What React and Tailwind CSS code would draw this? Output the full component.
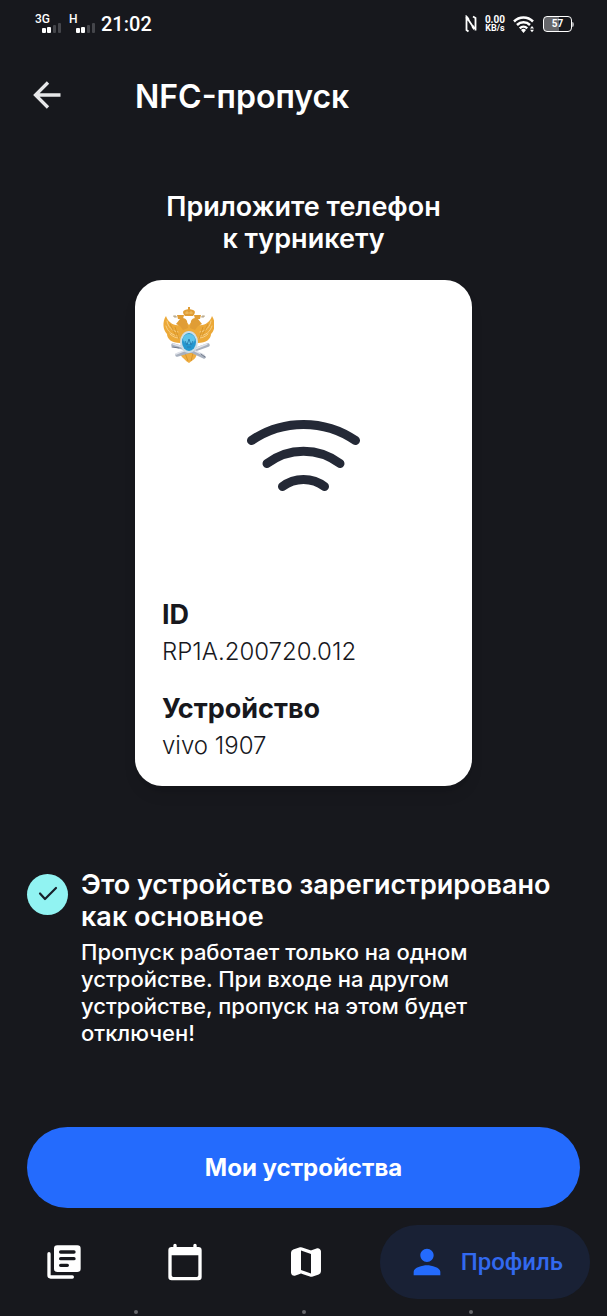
import React from 'react';

const navLinks = [
  {
    label: 'Новости',
    href: '#news',
    d: 'M3 6a1 1 0 0 0-1 1v13a2 2 0 0 0 2 2h13a1 1 0 0 0 0-2H4V7a1 1 0 0 0-1-1zM20 2H8a2 2 0 0 0-2 2v12a2 2 0 0 0 2 2h12a2 2 0 0 0 2-2V4a2 2 0 0 0-2-2zM18 11h-8a1 1 0 0 1 0-2h8a1 1 0 0 1 0 2zM14 15h-4a1 1 0 0 1 0-2h4a1 1 0 0 1 0 2zM18 7h-8a1 1 0 0 1 0-2h8a1 1 0 0 1 0 2z',
  },
  {
    label: 'Расписание',
    href: '#schedule',
    d: 'M20 3h-1V2a1 1 0 0 0-2 0v1H7V2a1 1 0 0 0-2 0v1H4a2 2 0 0 0-2 2v16a2 2 0 0 0 2 2h16a2 2 0 0 0 2-2V5a2 2 0 0 0-2-2zM19 21H5a1 1 0 0 1-1-1V8h16v12a1 1 0 0 1-1 1z',
  },
  {
    label: 'Карта',
    href: '#map',
    d: 'M14.65 4.98 9.65 3.230a2 2 0 0 0-1.300-.01L4.360 4.560A2 2 0 0 0 3 6.460v11.850c0 1.410 1.410 2.370 2.720 1.860l2.930-1.140c.22-.09.470-.09.690-.01l5 1.750c.42.150.880.150 1.300.010l3.990-1.340a2 2 0 0 0 1.360-1.900V5.690c0-1.410-1.410-2.370-2.720-1.860l-2.930 1.140c-.22.080-.46.090-.69.010zM15 18.890l-6-2.110V5.110l6 2.110v11.670z',
  },
];

function Emblem() {
  return (
    <svg viewBox="0 0 52 56" className="w-[52px] h-[56px]" role="img" aria-label="Герб">
      {/* Wings */}
      <g fill="#eca938">
        <path d="M4 9C0 15 1 23 5 27c0 5 5 9 13 9l6-3V19l-6-1C11 19 6 15 4 9z" />
        <path d="M50 9c4 6 3 14-1 18 0 5-5 9-13 9l-6-3V19l6-1c7 1 12-3 14-9z" />
        <path d="M19 32V18l4-5 4 5 4-5 4 5v14l-3 15-5 8-5-8z" />
      </g>
      <g fill="none" stroke="#f8cf85" strokeWidth="1" strokeLinecap="round">
        <path d="M5 14c1 6 5 10 11 11M4 19c2 6 6 9 12 10M8 27c3 3 6 4 9 4M49 14c-1 6-5 10-11 11M50 19c-2 6-6 9-12 10M46 27c-3 3-6 4-9 4" />
      </g>
      <path d="M8 17l6 12M13 20l4 12M46 17l-6 12M41 20l-4 12" stroke="#d28f25" strokeWidth=".8" fill="none" />
      {/* Heads and crowns */}
      <g fill="#e09d35">
        <path d="M14 17l4-5c2-2 6-1 7 2l1 7-5 2-3-4zM40 17l-4-5c-2-2-6-1-7 2l-1 7 5 2 3-4z" />
        <path d="M23 9c-2-2-3-5 0-6 2-1 6-1 8 0 3 1 2 4 0 6zM26 0h2v4h-2zM15 8h7l-1 4h-5zM32 8h7l-1 4h-5z" />
      </g>
      <path d="M23 6h8M25 7V4M29 7V4" stroke="#f3c46d" strokeWidth=".8" />
      <path d="M11 9l4 1M43 9l-4 1M13 8v3M41 8v3" stroke="#b8a88a" strokeWidth="1" />
      {/* Tail */}
      <path d="M18 47c2 4 5 5 6 7l3 2 4-3c2-1 3-3 4-6z" fill="#efae43" />
      <path d="M23 46l3 8M31 46l-2 8" stroke="#d28f25" strokeWidth=".8" />
      {/* Crossed quills */}
      <g strokeLinecap="round" fill="none">
        <path d="M11 38l14 4 17 8M46 38l-14 5-17 5" stroke="#a8b0bd" strokeWidth="3.500" />
        <path d="M11 37l13 4M45 37l-12 5M14 47l10-4M33 44l9 4" stroke="#e0e3ea" strokeWidth="1.400" />
        <path d="M10 40l7 1M39 47l4 3" stroke="#6f7888" strokeWidth="1" />
      </g>
      {/* Shield */}
      <ellipse cx="27" cy="35" rx="9" ry="11" fill="#cbdde6" />
      <ellipse cx="27" cy="35" rx="7" ry="9" fill="#2497cf" />
      <ellipse cx="27" cy="32" rx="6" ry="5" fill="#60c4e9" />
      <path d="M23 34l2 4 2-6 2 6 2-4M25 40h4" stroke="#2a7fb2" strokeWidth="1" fill="none" />
    </svg>
  );
}

function SignalBars() {
  return (
    <svg viewBox="0 0 20 10" className="w-5 h-[10px]" aria-hidden="true">
      <g fill="#fff">
        <rect x="0" y="5" width="4" height="5" rx="1" />
        <rect x="5" y="4" width="4" height="6" rx="1" />
      </g>
      <g fill="#45464b">
        <rect x="11" y="2" width="3" height="8" rx="1" />
        <rect x="16" y="0" width="3" height="10" rx="1" />
      </g>
    </svg>
  );
}

function StatusBar() {
  return (
    <div className="flex items-center justify-between h-12 pl-[35px] pr-[33px] font-['Roboto',sans-serif]">
      <div className="flex items-center">
        {/* Both SIM cards */}
        <div className="flex flex-col items-end w-[27px]">
          <span className="w-full text-[12px] leading-[8px] font-medium">3G</span>
          <SignalBars />
        </div>
        <div className="flex flex-col items-end w-[27px] ml-[7px]">
          <span className="w-full text-[12px] leading-[8px] font-medium">H</span>
          <SignalBars />
        </div>
        <span className="ml-[5px] text-[20px] leading-6 font-medium">21:02</span>
      </div>
      <div className="flex items-center gap-2">
        <svg viewBox="0 0 12 18" className="w-3 h-[18px]" fill="none" stroke="#fff" strokeWidth="1.800" aria-hidden="true">
          <path d="M3.500 16.500L1.500 15V2l8 12" />
          <path d="M8 1.500L10.500 3v12.500" />
          <path d="M1.500 2l2 3M9.500 14l-2-3" strokeWidth="2.600" />
        </svg>
        <div className="flex flex-col items-center font-bold">
          <span className="text-[10px] leading-[9px]">0.00</span>
          <span className="text-[9px] leading-[9px]">KB/s</span>
        </div>
        <svg viewBox="0 0 22 17" className="w-[22px] h-[17px]" aria-hidden="true">
          <g fill="none" stroke="#fff" strokeWidth="2.500">
            <path d="M1 5.500a13.500 13.500 0 0 1 19 0" />
            <path d="M4 9a9.300 9.300 0 0 1 13 0" />
            <path d="M6.800 12.300a5.400 5.400 0 0 1 7.400 0" />
          </g>
          <path d="M8 14a3.600 3.600 0 0 1 5 0L10.500 17zM17 12.500l2-2.500 2 2.500zM17 13.700l2 2.500 2-2.500z" fill="#fff" />
        </svg>
        <div className="flex items-center">
          <div className="flex items-center justify-center w-[29px] h-4 rounded-[4px] border border-white bg-linear-to-r from-[#66676b] from-57% to-[#17181d] to-57%">
            <span className="text-[10px] leading-3 font-bold">57</span>
          </div>
          <div className="w-[2px] h-[5px] rounded-r-sm bg-[#a0a1a4]" />
        </div>
      </div>
    </div>
  );
}

export default function App() {
  return (
    <div className="flex flex-col min-h-screen bg-[#17181d] text-white font-['Inter',sans-serif]">
      <StatusBar />

      <header className="flex items-center h-[94px] px-[27px]">
        <button className="flex items-center justify-center w-10 h-10" aria-label="Назад">
          <svg viewBox="0 0 28 28" className="w-7 h-7" fill="none" stroke="#e7e7e9" strokeWidth="3.300" aria-hidden="true">
            <path d="M27.500 14H3M15 1.500L2.500 14 15 26.500" />
          </svg>
        </button>
        <h1 className="ml-[68px] mt-1 text-[32px] leading-10 font-semibold">NFC-пропуск</h1>
      </header>

      <main className="flex flex-col grow px-[27px] pt-[49px]">
        <h2 className="text-center text-[27px] leading-8 font-semibold">
          Приложите телефон
          <br />
          к турникету
        </h2>

        {/* Pass card */}
        <section className="mx-[108px] mt-[25px] p-[27px] rounded-[27px] bg-white text-[#17181d] shadow-lg">
          <Emblem />
          <svg viewBox="0 0 114 73" className="w-[114px] h-[73px] mx-auto mt-14" fill="none" stroke="#242936" strokeWidth="9" strokeLinecap="round" aria-hidden="true">
            <path d="M4.500 21.500C35.500 0 77.500 0 108.500 21.500" />
            <path d="M20 44.500C41.500 28 71.500 28 93 44.500" />
            <path d="M35.500 67.500C47.500 58 65.500 58 77.500 67.500" />
          </svg>
          <dl className="mt-[107px]">
            <dt className="text-[27px] leading-8 font-bold">ID</dt>
            <dd className="mt-[7px] text-[24px] leading-[27px] font-light">RP1A.200720.012</dd>
            <dt className="mt-7 text-[27px] leading-8 font-bold">Устройство</dt>
            <dd className="mt-[7px] text-[24px] leading-[27px] font-light">vivo 1907</dd>
          </dl>
        </section>

        {/* Registration status */}
        <section className="flex items-start gap-[13px] mt-[83px]">
          <div className="flex items-center justify-center shrink-0 w-[41px] h-[41px] mt-[5px] rounded-full bg-[#91f3f2]">
            <svg viewBox="0 0 20 16" className="w-5 h-4 -mt-1" fill="none" stroke="#17202b" strokeWidth="2.200" strokeLinecap="round" strokeLinejoin="round" aria-hidden="true">
              <path d="M2 8.500L7 14 18 3" />
            </svg>
          </div>
          <div>
            <h3 className="text-[27px] leading-8 font-semibold">Это устройство зарегистрировано как основное</h3>
            <p className="mt-[6px] mr-20 text-[22px] leading-[27px] font-medium">
              Пропуск работает только на одном устройстве. При входе на другом устройстве, пропуск на этом будет отключен!
            </p>
          </div>
        </section>

        <button className="mt-20 w-full h-[81px] rounded-full bg-[#246bfd] text-[24px] leading-7 font-bold">Мои устройства</button>
      </main>

      <nav className="flex items-center justify-between mt-[17px] px-[17px]">
        {navLinks.map((link) => (
          <a key={link.href} href={link.href} aria-label={link.label} className="px-[27px] py-[17px]">
            <svg viewBox="0 0 24 24" className="w-10 h-10" fill="#fff" fillRule="evenodd" aria-hidden="true">
              <path d={link.d} />
            </svg>
          </a>
        ))}
        <a href="#profile" className="flex items-center gap-[14px] px-[27px] py-[17px] rounded-full bg-[#192135] text-[#3269ef]">
          <svg viewBox="0 0 24 24" className="w-10 h-10" fill="#246bfd" aria-hidden="true">
            <path d="M12 12c2.210 0 4-1.790 4-4s-1.790-4-4-4-4 1.790-4 4 1.790 4 4 4zm0 2c-2.670 0-8 1.340-8 4v2h16v-2c0-2.660-5.330-4-8-4z" />
          </svg>
          <span className="font-['Roboto',sans-serif] text-[24px] leading-7 font-medium">Профиль</span>
        </a>
      </nav>

      {/* System gesture hints */}
      <div className="flex justify-between px-[134px] pt-[11px] pb-[2px]">
        <span className="w-1 h-1 rounded-full bg-[#66676b]" />
        <span className="w-1 h-1 rounded-full bg-[#66676b]" />
        <span className="w-1 h-1 rounded-full bg-[#66676b]" />
      </div>
    </div>
  );
}
